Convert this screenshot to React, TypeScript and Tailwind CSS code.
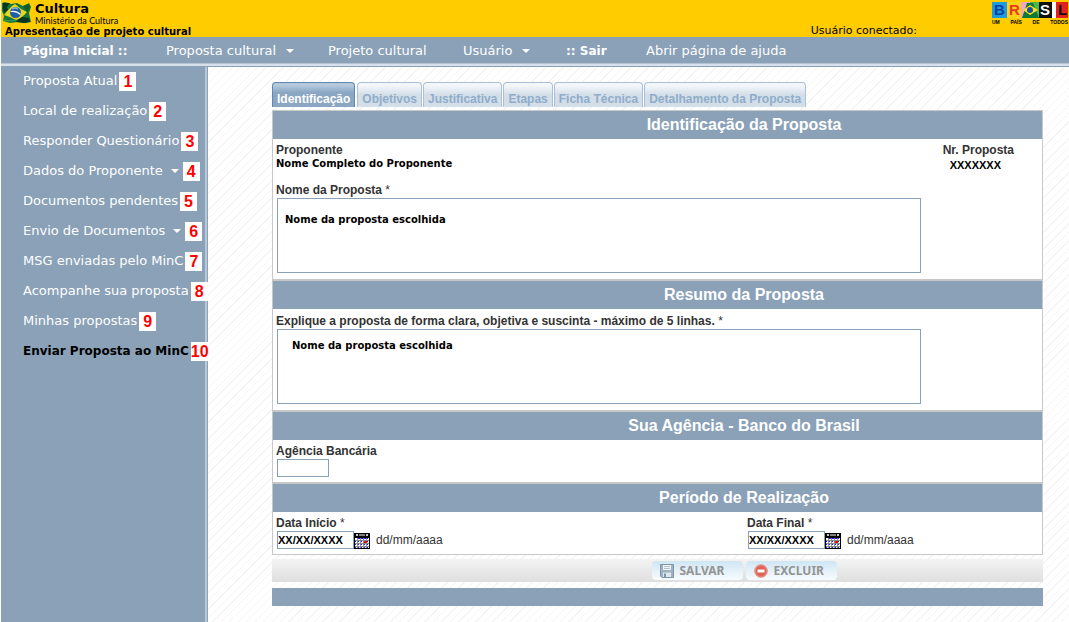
import type { ReactNode } from "react";

const stripes = "bg-[repeating-linear-gradient(135deg,#ffffff_0px,#ffffff_5px,#f4f4f4_5px,#f4f4f4_6px)]";
const field = "block resize-none border border-[#8aa1b8] bg-white font-bold text-black";

function Caret({ className = "" }: { className?: string }) {
  return (
    <svg viewBox="0 0 8 4" className={`h-1 w-2 shrink-0 ${className}`} fill="#fff" aria-hidden="true">
      <path d="M0 0h8L4 4z" />
    </svg>
  );
}

function FlagLogo() {
  return (
    <svg viewBox="0 0 30 25" className="h-[25px] w-[30px]" aria-hidden="true">
      <path d="M1 3l3-1 6 2 6-1 6 3 6-3 2 4-2 6 2 9-6 1-7-1-8 1-7-2 1-5-2-5z" fill="#15763a" />
      <path d="M2 3h7l-3 4 1 3-4 3-1-4zM20 17l8 1 1 4-6 1-8-1z" fill="#0a3523" />
      <path d="M22 6l6-2 1 4-3 4z" fill="#0f5a2e" />
      <path d="M3 15q6-8 11-11 5 5 12 8-5 6-11 8-5-3-12-5z" fill="#e9d71c" />
      <circle cx="14.500" cy="12.500" r="5.500" fill="#1f5fa8" />
      <path d="M11 9q3-2 6 0" stroke="#7fb2dc" strokeWidth="1.500" fill="none" />
      <path d="M9.500 11.500q6-1 10 3" stroke="#fff" strokeWidth="1.200" fill="none" />
      <path d="M2 20l7 1 6-1" stroke="#3fa154" fill="none" />
    </svg>
  );
}

function BrasilLogo() {
  return (
    <div className="mr-px w-[76px] pt-0.5 font-['Liberation_Sans',Arial,sans-serif]">
      <svg viewBox="0 0 76 16" className="block h-4 w-[76px] overflow-visible text-[15px] font-bold" role="img" aria-label="Brasil">
        <path d="M0 0h15v16H0z" fill="#1e9be0" />
        <path d="M15 0h14v16H15z" fill="#ffd21a" />
        <path d="M29 0h9v16h-9z" fill="#f4a6c4" />
        <path d="M38 0h9v16h-9z" fill="#4fb84a" />
        <path d="M47 0h13v16H47z" fill="#111" />
        <path d="M60 0h16v16H60z" fill="#e2201c" />
        <text x="2" y="13" fill="#0a3f9c">B</text>
        <text x="17" y="13" fill="#e6391e">R</text>
        <text x="48" y="13" fill="#fff">S</text>
        <path d="M60 0h4v16h-4z" fill="#fff" />
        <text x="66" y="13" fill="#111">L</text>
        <path d="M30 16L35 1h6l6 15z" fill="#0e7a37" />
        <path d="M31 8l7-5 8 5-8 5z" fill="#ffe11a" />
        <circle cx="38" cy="8" r="3" fill="#1450a0" />
      </svg>
      <p className="flex justify-between pt-px text-[5px] leading-[6px] font-bold">
        <span>UM</span><span>PAÍS</span><span>DE</span><span>TODOS</span>
      </p>
    </div>
  );
}

const topItems: { label: string; bold?: boolean; caret?: boolean; width: string }[] = [
  { label: "Página Inicial ::", bold: true, width: "w-[143px]" },
  { label: "Proposta cultural", caret: true, width: "w-[162px]" },
  { label: "Projeto cultural", width: "w-[135px]" },
  { label: "Usuário", caret: true, width: "w-[103px]" },
  { label: ":: Sair", bold: true, width: "w-[80px]" },
  { label: "Abrir página de ajuda", width: "w-[160px]" },
];

const sideItems: { label: string; n: number; caret?: boolean; active?: boolean }[] = [
  { label: "Proposta Atual", n: 1 },
  { label: "Local de realização", n: 2 },
  { label: "Responder Questionário", n: 3 },
  { label: "Dados do Proponente", n: 4, caret: true },
  { label: "Documentos pendentes", n: 5 },
  { label: "Envio de Documentos", n: 6, caret: true },
  { label: "MSG enviadas pelo MinC", n: 7 },
  { label: "Acompanhe sua proposta", n: 8 },
  { label: "Minhas propostas", n: 9 },
  { label: "Enviar Proposta ao MinC", n: 10, active: true },
];

const tabs = ["Identificação", "Objetivos", "Justificativa", "Etapas", "Ficha Técnica", "Detalhamento da Proposta"];

function Section({ title, children }: { title: string; children: ReactNode }) {
  return (
    <section className="border border-[#c8c8c8] bg-white">
      <h2 className="bg-[#8aa1b8] pl-[173px] text-center text-base leading-7 font-bold text-white">{title}</h2>
      {children}
    </section>
  );
}

function Label({ htmlFor, children, required }: { htmlFor: string; children: ReactNode; required?: boolean }) {
  return (
    <label htmlFor={htmlFor} className="block leading-4 font-bold">
      {children}
      {required && <span className="font-normal"> *</span>}
    </label>
  );
}

function CalendarIcon() {
  return (
    <svg viewBox="0 0 16 16" className="block size-4" shapeRendering="crispEdges" aria-hidden="true">
      <path d="M0 0h16v16H0z" fill="#000" />
      <path d="M1 5h14v10H1z" fill="#fff" />
      <path d="M5 1h6v2H5z" fill="#808080" />
      <path d="M2 1h2v2H2zM12 1h2v2h-2z" fill="#c8c8c8" />
      <path d="M1 7h14v1H1zM1 10h14v1H1zM1 13h14v1H1zM3 5h1v10H3zM6 5h1v10H6zM9 5h1v10H9zM12 5h1v10h-1z" fill="#8c8c8c" />
      <path d="M4 5h2v1H4zM7 5h2v1H7zM10 5h2v1h-2zM13 5h1v1h-1zM1 8h1v1H1zM4 8h1v1H4zM7 8h1v1H7zM13 8h1v1h-1zM1 11h1v1H1zM4 11h1v1H4zM7 11h1v1H7zM10 11h1v1h-1zM13 11h1v1h-1zM1 14h1v1H1zM4 14h1v1H4zM7 14h1v1H7zM10 14h1v1h-1zM13 14h1v1h-1z" fill="#1414ff" />
      <path d="M10 8h3v2h-3z" fill="#f00" />
    </svg>
  );
}

function DateField({ id, label }: { id: string; label: string }) {
  return (
    <div>
      <Label htmlFor={id} required>{label}</Label>
      <div className="flex items-end pl-px">
        <input id={id} defaultValue="XX/XX/XXXX" className={`h-[18px] w-[77px] text-[11px] ${field}`} />
        <button type="button" aria-label={`Calendário: ${label}`}><CalendarIcon /></button>
        <span className="pl-1.5 leading-[18px]">dd/mm/aaaa</span>
      </div>
    </div>
  );
}

function SaveIcon() {
  return (
    <svg viewBox="0 0 14 14" className="size-3.5" aria-hidden="true">
      <path d="M.5.5h13v13H2L.5 12z" fill="#9db1bf" stroke="#7d95a6" />
      <path d="M3 1h8v5H3z" fill="#eef4f8" />
      <path d="M4 2.500h6M4 4.500h6" stroke="#b4c2cc" />
      <path d="M3 8.500h8V13H3z" fill="#dde7ee" />
      <path d="M4 9.500h2V13H4z" fill="#7d95a6" />
    </svg>
  );
}

function DeleteIcon() {
  return (
    <svg viewBox="0 0 14 14" className="size-3.5" aria-hidden="true">
      <circle cx="7" cy="7" r="6.300" fill="#e9796d" stroke="#dc978e" />
      <circle cx="7" cy="7" r="5" fill="#e06155" />
      <path d="M3.500 5.500h7v3h-7z" fill="#fff" />
    </svg>
  );
}

function ActionButton({ icon, children }: { icon: ReactNode; children: ReactNode }) {
  return (
    <button
      type="button"
      className="flex h-[19px] w-[91px] items-center gap-1.5 rounded-sm bg-linear-to-b from-[#cfe6f4] to-[#f8fbfd] pl-2 font-['Noto_Sans',sans-serif] text-xs font-bold text-[#949494]"
    >
      {icon}
      {children}
    </button>
  );
}

export default function App() {
  return (
    <div className="flex min-h-screen flex-col bg-white pl-px font-['DejaVu_Sans',Verdana,sans-serif]">
      <header className="flex justify-between bg-[#ffcc00] text-black">
        <div>
          <div className="flex gap-1">
            <FlagLogo />
            <div className="pt-px">
              <div className="text-[13px] leading-[15px] font-bold">Cultura</div>
              <div className="font-['Lato',sans-serif] text-[9px] leading-[10px]">Ministério da Cultura</div>
            </div>
          </div>
          <h1 className="pl-1 text-[10px] leading-[11px] font-bold">Apresentação de projeto cultural</h1>
        </div>
        <div className="flex items-start gap-[75px]">
          <p className="pt-[25px] text-[11px] leading-3">Usuário conectado:</p>
          <BrasilLogo />
        </div>
      </header>

      <nav className="bg-[#8aa1b8]">
        <div className="flex pt-0.5 pl-[22px] text-[13px] leading-6 text-white">
          {topItems.map((item) => (
            <a
              key={item.label}
              href="#"
              className={`flex shrink-0 items-center gap-2.5 ${item.width} ${item.bold ? "text-xs leading-6 font-bold" : ""}`}
            >
              {item.label}
              {item.caret && <Caret />}
            </a>
          ))}
        </div>
        <div className="h-px bg-[#b4c3d3]" />
        <div className="h-0.5 bg-[#d8e1ea]" />
        <div className="h-px bg-[#8aa1b8]" />
      </nav>

      <div className="flex grow">
        <aside className="flex w-[207px] shrink-0">
          <div className="w-[204px] bg-[#8aa1b8] text-[13px] text-white">
            {sideItems.map((item) => (
              <a
                key={item.n}
                href="#"
                className={`relative flex h-[30px] items-center pb-0.5 pl-[22px] whitespace-nowrap ${item.active ? "text-xs font-bold text-black" : ""}`}
              >
                {item.label}
                {item.caret && <Caret className="mr-0.5 ml-2" />}
                <b
                  className={`ml-0.5 shrink-0 bg-white font-['Liberation_Sans',Arial,sans-serif] text-base leading-[19px] text-[#f00] ${item.active ? "px-0" : "px-1"}`}
                >
                  {item.n}
                </b>
              </a>
            ))}
          </div>
          <div className="w-0.5 bg-[#b9c8d8]" />
          <div className="w-px bg-[#8aa1b8]" />
        </aside>

        <main
          className={`min-w-0 grow pt-[15px] pr-[26px] pl-16 font-['Liberation_Sans',Arial,sans-serif] text-xs text-[#333] ${stripes}`}
        >
          <div className="flex gap-px pb-[3px]">
            {tabs.map((tab, i) => (
              <button
                key={tab}
                type="button"
                className={`h-[25px] rounded-t border border-b-0 px-1 pt-2 font-bold whitespace-nowrap ${
                  i === 0
                    ? "mr-px border-[#6089ad] bg-linear-to-b from-[#b4c9dc] from-10% to-[#8aa6c3] to-40% text-white"
                    : "border-[#a9c0d6] bg-linear-to-b from-[#f4f7fa] from-10% to-[#d3dee8] to-50% text-[#8fadca]"
                }`}
              >
                {tab}
              </button>
            ))}
          </div>

          <Section title="Identificação da Proposta">
            <div className="px-[3px] pt-[3px] pb-1.5">
              <div className="flex justify-between pr-[25px]">
                <div>
                  <div className="leading-4 font-bold">Proponente</div>
                  <div className="font-['DejaVu_Sans',Verdana,sans-serif] text-[10px] leading-3 font-bold text-black">
                    Nome Completo do Proponente
                  </div>
                </div>
                <div className="text-center font-bold">
                  <div className="leading-4">Nr. Proposta</div>
                  <div className="pr-1.5 text-[11px] leading-3.5 text-black">XXXXXXX</div>
                </div>
              </div>
              <div className="pt-[10px] pr-[118px]">
                <Label htmlFor="nome" required>Nome da Proposta</Label>
                <div className="pl-px">
                  <textarea
                    id="nome"
                    defaultValue="Nome da proposta escolhida"
                    className={`h-[75px] w-full px-[7px] pt-[15px] font-['DejaVu_Sans',Verdana,sans-serif] text-[10px] leading-3 ${field}`}
                  />
                </div>
              </div>
            </div>
          </Section>

          <Section title="Resumo da Proposta">
            <div className="pt-1 pr-[121px] pb-1.5 pl-[3px]">
              <Label htmlFor="resumo" required>
                Explique a proposta de forma clara, objetiva e suscinta - máximo de 5 linhas.
              </Label>
              <div className="pl-px">
                <textarea
                  id="resumo"
                  defaultValue="Nome da proposta escolhida"
                  className={`h-[75px] w-full px-3.5 pt-[10px] font-['DejaVu_Sans',Verdana,sans-serif] text-[10px] leading-3 ${field}`}
                />
              </div>
            </div>
          </Section>

          <Section title="Sua Agência - Banco do Brasil">
            <div className="px-[3px] pt-[3px] pb-[5px]">
              <Label htmlFor="agencia">Agência Bancária</Label>
              <div className="pl-px">
                <input id="agencia" className={`h-[18px] w-[52px] text-[11px] ${field}`} />
              </div>
            </div>
          </Section>

          <Section title="Período de Realização">
            <div className="grid grid-cols-[471fr_292fr] px-[3px] pt-[3px] pb-[5px]">
              <DateField id="inicio" label="Data Início" />
              <DateField id="final" label="Data Final" />
            </div>
          </Section>

          <div className="mt-1 flex h-[23px] items-center justify-center gap-[3px] bg-linear-to-b from-[#f3f3f3] to-[#dfdfdf] pl-[173px]">
            <ActionButton icon={<SaveIcon />}>SALVAR</ActionButton>
            <ActionButton icon={<DeleteIcon />}>EXCLUIR</ActionButton>
          </div>
          <footer className="mt-1.5 h-[18px] bg-[#8aa1b8]" />
        </main>
      </div>
    </div>
  );
}
